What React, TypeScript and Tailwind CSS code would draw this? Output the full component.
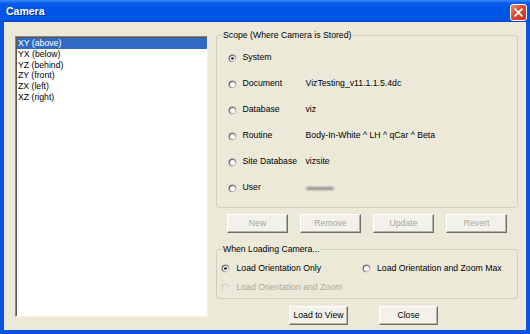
import React from 'react';

const font = { fontFamily: '"Liberation Sans", Arial, sans-serif' };

function Radio({ checked = false, disabled = false, id }: { checked?: boolean; disabled?: boolean; id: string }) {
  return (
    <svg width="9" height="9" viewBox="0 0 10 10" className="shrink-0">
      <defs>
        <linearGradient id={`o-${id}`} x1="0" y1="0" x2="1" y2="1">
          <stop offset="0%" stopColor={disabled ? '#C8C5B8' : '#7A7A7A'} />
          <stop offset="55%" stopColor={disabled ? '#D8D5C8' : '#9A9A9A'} />
          <stop offset="100%" stopColor="#FFFFFF" />
        </linearGradient>
        <linearGradient id={`i-${id}`} x1="0" y1="0" x2="1" y2="1">
          <stop offset="0%" stopColor={disabled ? '#D6D3C6' : '#404040'} />
          <stop offset="100%" stopColor="#E4E1D6" />
        </linearGradient>
      </defs>
      <circle cx="5" cy="5" r="4.5" fill={`url(#o-${id})`} />
      <circle cx="5" cy="5" r="3.6" fill={`url(#i-${id})`} />
      <circle cx="5" cy="5" r="2.8" fill={disabled ? '#ECE9D8' : '#FFFFFF'} />
      {checked && <circle cx="5" cy="5" r="1.5" fill="#111111" />}
    </svg>
  );
}

function Btn({ children, disabled = false, w = 'w-[61px]' }: { children: React.ReactNode; disabled?: boolean; w?: string }) {
  return (
    <div
      className={`${w} h-[19px] flex items-center justify-center text-[8.7px] bg-[#F3F2EA] border border-t-white border-l-white border-r-[#6F6D64] border-b-[#6F6D64] shadow-[inset_-1px_-1px_0_#B5B2A6] ${
        disabled ? 'text-[#A8A699]' : 'text-black'
      }`}
    >
      {children}
    </div>
  );
}

const scopes = [
  { label: 'System', value: '', checked: true },
  { label: 'Document', value: 'VizTesting_v11.1.1.5.4dc' },
  { label: 'Database', value: 'viz' },
  { label: 'Routine', value: 'Body-In-White ^ LH ^ qCar ^ Beta' },
  { label: 'Site Database', value: 'vizsite' },
  { label: 'User', value: '', blurred: true },
];

const views = ['XY (above)', 'YX (below)', 'YZ (behind)', 'ZY (front)', 'ZX (left)', 'XZ (right)'];

export default function App() {
  return (
    <div className="w-[530px] h-[334px] flex flex-col bg-[#0A55E0] overflow-hidden" style={font}>
      {/* title bar */}
      <div className="h-[22px] shrink-0 flex items-start justify-between pl-[6px] pr-[3px] bg-[linear-gradient(to_bottom,#3D8BF7_0%,#0A5DEC_14%,#0054E3_50%,#0058EC_85%,#0046C8_100%)]">
        <span className="text-white font-bold text-[10.5px] leading-[23px] [text-shadow:1px_1px_0_#0A2C8A]">Camera</span>
        <div className="mt-[4px] w-[17px] h-[17px] rounded-[3px] border border-white bg-[linear-gradient(135deg,#F08A6E_0%,#E0482E_45%,#C8331E_100%)] flex items-center justify-center">
          <svg width="9" height="9" viewBox="0 0 9 9">
            <path d="M1.2 1.2 L7.8 7.8 M7.8 1.2 L1.2 7.8" stroke="#FFFFFF" strokeWidth="1.8" strokeLinecap="square" />
          </svg>
        </div>
      </div>

      {/* client area */}
      <div className="flex-1 mx-[4px] mb-[4px] bg-[#ECE9D8] flex items-start text-[8.7px] text-black">
        {/* list */}
        <div className="ml-[11px] mt-[14px] w-[193px] h-[281px] bg-white border border-t-[#8C8A80] border-l-[#8C8A80] border-r-[#F4F2E8] border-b-[#F4F2E8] shadow-[inset_1px_1px_0_#5A5850]">
          <div className="pt-[1px] pl-[1px]">
            {views.map((v, i) => (
              <div
                key={v}
                className={`h-[10.8px] leading-[10.8px] pl-[1px] ${i === 0 ? 'bg-[#316AC5] text-white' : ''}`}
              >
                {v}
              </div>
            ))}
          </div>
        </div>

        {/* right column */}
        <div className="ml-[8px] mt-[8px] w-[302px] flex flex-col">
          <fieldset className="border border-[#D0D0BF] rounded-[3px] px-0 pb-[6px]">
            <legend className="ml-[5px] px-[1px] leading-[11px]">Scope (Where Camera is Stored)</legend>
            <div className="mt-[4px] flex flex-col">
              {scopes.map((s, i) => (
                <div key={s.label} className="h-[26px] flex items-center pl-[11px]">
                  <Radio id={`s${i}`} checked={s.checked} />
                  <span className="ml-[5.5px] w-[63px] shrink-0 whitespace-nowrap">{s.label}</span>
                  {s.blurred ? (
                    <div className="w-[28px] h-[3px] rounded bg-[#8E8E8E] blur-[0.8px]" />
                  ) : (
                    <span className="whitespace-nowrap">{s.value}</span>
                  )}
                </div>
              ))}
            </div>
          </fieldset>

          <div className="mt-[6px] ml-[11px] flex gap-[12px]">
            <Btn disabled>New</Btn>
            <Btn disabled>Remove</Btn>
            <Btn disabled>Update</Btn>
            <Btn disabled>Revert</Btn>
          </div>

          <fieldset className="mt-[10.5px] border border-[#D0D0BF] rounded-[3px] px-0 pb-0">
            <legend className="ml-[5px] px-[1px] leading-[11px]">When Loading Camera...</legend>
            <div className="mt-[4px] grid grid-cols-[144.5px_1fr]">
              <div className="h-[19.5px] flex items-center pl-[4px]">
                <Radio id="l1" checked />
                <span className="ml-[6.5px] whitespace-nowrap">Load Orientation Only</span>
              </div>
              <div className="h-[19.5px] flex items-center">
                <Radio id="l2" />
                <span className="ml-[6.5px] whitespace-nowrap">Load Orientation and Zoom Max</span>
              </div>
              <div className="h-[19.5px] flex items-center pl-[4px] text-[#ACA899]">
                <Radio id="l3" disabled />
                <span className="ml-[6.5px] whitespace-nowrap">Load Orientation and Zoom</span>
              </div>
            </div>
          </fieldset>

          <div className="mt-[7.5px] ml-[73px] flex gap-[31px]">
            <Btn w="w-[59px]">Load to View</Btn>
            <Btn w="w-[59px]">Close</Btn>
          </div>
        </div>
      </div>
    </div>
  );
}
